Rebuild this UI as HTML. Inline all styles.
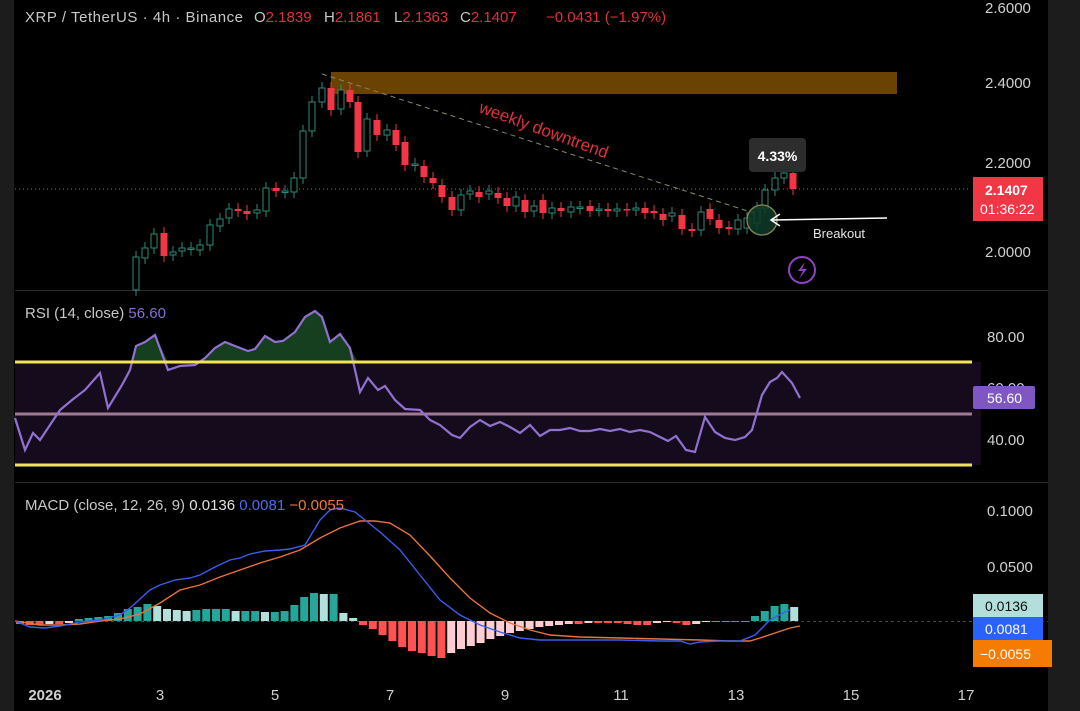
<!DOCTYPE html>
<html><head><meta charset="utf-8"><style>
html,body{margin:0;padding:0;background:#000;width:1080px;height:711px;overflow:hidden}
svg{display:block}
text{font-family:"Liberation Sans",sans-serif}
</style></head><body>
<svg id="s" width="1080" height="711" viewBox="0 0 1080 711" xmlns="http://www.w3.org/2000/svg">
<rect width="1080" height="711" fill="#000"/>
<rect x="0" y="0" width="14" height="711" fill="#1c1c1c"/>
<rect x="1048" y="0" width="32" height="711" fill="#1c1c1c"/>
<line x1="15" y1="290.5" x2="1048" y2="290.5" stroke="#2b2b2b"/>
<line x1="15" y1="482.5" x2="1048" y2="482.5" stroke="#2b2b2b"/>
<rect x="331" y="72" width="566" height="22" fill="#6a4204"/>
<line x1="15" y1="189" x2="970" y2="189" stroke="#777" stroke-dasharray="1 3"/>
<line x1="322" y1="74" x2="760" y2="215" stroke="#8a8a6a" stroke-dasharray="5 4"/>
<text x="478" y="112" fill="#e0303d" font-size="17" transform="rotate(20 478 112)">weekly downtrend</text>
<g id="candles"></g>
<circle cx="762" cy="220" r="15" fill="#0f3a28" fill-opacity=".85" stroke="#8a8a4a" stroke-width="1.3"/>
<line x1="887" y1="218" x2="772" y2="220" stroke="#fff" stroke-width="1.5"/>
<path d="M780 214 L771 220 L780 226" fill="none" stroke="#fff" stroke-width="1.5"/>
<text x="813" y="238" fill="#e6e6e6" font-size="13">Breakout</text>
<rect x="749" y="138" width="57" height="34" rx="4" fill="#2d2d2d"/>
<text x="777.5" y="161" fill="#fff" font-size="14" font-weight="bold" text-anchor="middle">4.33%</text>
<circle cx="802" cy="270" r="13" fill="none" stroke="#8e44c0" stroke-width="2"/>
<path d="M805 262 L798 271 L803 271 L799 279 L807 269 L802 269 Z" fill="#8e44c0"/>
<g font-size="15" fill="#c8c8c8">
<text x="25" y="22" textLength="218" lengthAdjust="spacing">XRP / TetherUS · 4h · Binance</text>
<text x="254" y="22">O<tspan fill="#e0303d">2.1839</tspan></text>
<text x="324" y="22">H<tspan fill="#e0303d">2.1861</tspan></text>
<text x="394" y="22">L<tspan fill="#e0303d">2.1363</tspan></text>
<text x="460" y="22">C<tspan fill="#e0303d">2.1407</tspan></text>
<text x="546" y="22" fill="#e0303d">−0.0431 (−1.97%)</text>
</g>
<g fill="#d0d0d0" font-size="15">
<text x="985" y="13">2.6000</text><text x="985" y="88">2.4000</text><text x="985" y="168">2.2000</text><text x="985" y="257">2.0000</text>
<text x="987" y="342">80.00</text><text x="987" y="445">40.00</text><text x="987" y="393">60.00</text>
<text x="987" y="516">0.1000</text><text x="987" y="572">0.0500</text>
</g>
<rect x="973" y="177" width="70" height="44" fill="#f23645"/>
<text x="985" y="195" fill="#fff" font-size="14" font-weight="bold">2.1407</text>
<text x="980" y="214" fill="#fff" font-size="14">01:36:22</text>
<rect x="15" y="362" width="966" height="103" fill="#150b1d"/>
<line x1="15" y1="414" x2="972" y2="414" stroke="#a07a95" stroke-width="3"/>
<path id="rsifill" fill="#1f5a2c" fill-opacity=".7"/>
<polyline id="rsi" fill="none" stroke="#9170d0" stroke-width="2.2"/>
<line x1="15" y1="362" x2="972" y2="362" stroke="#f1e35a" stroke-width="3"/>
<line x1="15" y1="465" x2="972" y2="465" stroke="#f1e35a" stroke-width="3"/>
<rect x="973" y="386" width="62" height="23" rx="2" fill="#7e57c2"/>
<text x="987" y="403" fill="#fff" font-size="14">56.60</text>
<text x="25" y="318" fill="#c8c8c8" font-size="15">RSI (14, close) <tspan fill="#8a6fd0">56.60</tspan></text>
<line x1="15" y1="621.5" x2="1048" y2="621.5" stroke="#444" stroke-dasharray="3 3"/>
<g id="hist"></g>
<polyline id="sig" fill="none" stroke="#e8743a" stroke-width="1.4"/>
<polyline id="macd" fill="none" stroke="#3a5ff0" stroke-width="1.4"/>
<text x="25" y="510" fill="#c8c8c8" font-size="15">MACD (close, 12, 26, 9)  <tspan fill="#e0e0e0">0.0136</tspan>  <tspan fill="#4a6cf7">0.0081</tspan>  <tspan fill="#f07a3a">−0.0055</tspan></text>
<rect x="973" y="594" width="70" height="23" fill="#b2dfdb"/>
<text x="985" y="611" fill="#111" font-size="14">0.0136</text>
<rect x="973" y="617" width="70" height="23" fill="#2962ff"/>
<text x="985" y="634" fill="#fff" font-size="14">0.0081</text>
<rect x="973" y="640" width="79" height="27" fill="#f57c00"/>
<text x="980" y="659" fill="#fff" font-size="14">−0.0055</text>
<g fill="#d0d0d0" font-size="15" text-anchor="middle">
<text x="45" y="700" font-weight="bold">2026</text><text x="160" y="700">3</text><text x="275" y="700">5</text><text x="390" y="700">7</text><text x="505" y="700">9</text><text x="621" y="700">11</text><text x="736" y="700">13</text><text x="851" y="700">15</text><text x="966" y="700">17</text>
</g>
</svg>
<script>
var NS="http://www.w3.org/2000/svg";
function el(t,a,p){var e=document.createElementNS(NS,t);for(var k in a)e.setAttribute(k,a[k]);p.appendChild(e);return e;}
var C=[[136,290,257],[145,258,248],[154,248,234],[164,233,256],[173,255,252],[182,251,248],[191,248,248],[200,250,245],[210,245,225],[220,226,219],[229,218,209],[238,209,211],[247,211,214],[257,213,210],[266,211,188],[276,188,191],[285,191,191],[294,192,178],[303,178,131],[312,131,102],[322,102,88],[331,88,110],[341,109,90],[350,90,102],[358,102,152],[367,151,119],[377,120,135],[387,135,130],[396,130,145],[405,142,165],[415,164,164],[424,166,177],[433,178,183],[442,185,197],[452,197,210],[461,210,195],[470,194,191],[479,192,197],[489,194,191],[498,193,198],[507,198,206],[516,206,197],[525,200,212],[534,211,206],[543,200,213],[552,213,208],[561,208,211],[571,212,207],[580,208,207],[590,206,211],[599,209,209],[608,209,211],[617,211,209],[627,209,210],[636,210,208],[645,208,213],[654,211,213],[663,214,220],[672,216,213],[682,215,229],[692,229,231],[701,230,212],[710,209,219],[719,220,228],[729,227,229],[738,229,220],[747,228,218],[757,223,208],[765,208,190],[775,190,178],[784,178,173],[793,173,189]];
var g=document.getElementById("candles");
C.forEach(function(c){var x=c[0],o=c[1],cl=c[2],up=cl<=o;var t=Math.min(o,cl),b=Math.max(o,cl);if(b-t<1.5)b=t+1.5;
var col=up?"#2a8a78":"#f23645";
el("line",{x1:x,y1:t-6,x2:x,y2:b+6,stroke:col,"stroke-width":1},g);
if(up)el("rect",{x:x-3,y:t,width:6,height:b-t,fill:"#000",stroke:col,"stroke-width":1},g);
else el("rect",{x:x-3.5,y:t,width:7,height:b-t,fill:col},g);});
var R=[[15,418],[25,450],[33,433],[40,440],[50,425],[60,410],[72,400],[85,390],[100,373],[108,408],[122,385],[130,370],[136,346],[145,342],[155,335],[168,370],[180,366],[195,365],[205,358],[215,348],[225,342],[235,346],[248,351],[255,349],[265,336],[275,342],[283,341],[295,332],[305,317],[315,311],[322,317],[330,342],[340,334],[350,348],[360,392],[368,378],[378,390],[385,386],[395,400],[405,409],[420,410],[430,420],[440,425],[452,435],[460,438],[470,427],[480,420],[490,426],[500,422],[510,427],[520,433],[530,425],[540,436],[550,430],[560,430],[570,428],[580,431],[590,431],[600,429],[610,431],[620,429],[630,432],[640,430],[650,432],[660,437],[668,441],[676,436],[686,450],[695,452],[705,417],[715,432],[725,438],[735,440],[745,437],[752,430],[762,395],[770,382],[777,378],[782,372],[792,383],[800,398]];
document.getElementById("rsi").setAttribute("points",R.map(function(p){return p.join(",")}).join(" "));
var f="M132,362 "+R.filter(function(p){return p[0]>=134&&p[0]<=358}).map(function(p){return "L"+p[0]+","+Math.min(p[1],362)}).join(" ")+" L358,362 Z";
document.getElementById("rsifill").setAttribute("d",f);
var M=[[15,621],[30,627],[45,628],[60,626],[80,622],[100,620],[120,615],[130,608],[150,590],[160,585],[175,580],[190,578],[200,575],[215,567],[230,560],[240,558],[250,554],[265,551],[280,550],[290,549],[305,545],[320,520],[330,510],[340,508],[355,512],[365,520],[380,532],[400,550],[420,575],[440,600],[460,615],[480,625],[500,632],[520,638],[540,640],[570,640],[620,640],[660,641],[680,641],[690,644],[700,642],[720,641],[740,641],[755,635],[770,620],[785,612],[790,610]];
var S=[[15,621],[40,625],[60,625],[80,624],[100,621],[120,619],[140,614],[160,603],[180,590],[200,585],[220,577],[240,570],[260,563],[280,557],[300,550],[320,538],[340,528],[360,521],[375,521],[390,523],[410,535],[430,556],[450,578],[470,598],[490,613],[510,623],[530,630],[550,635],[580,637],[620,638],[660,639],[700,640],[730,641],[750,641],[760,638],[775,633],[790,628],[800,626]];
document.getElementById("macd").setAttribute("points",M.map(function(p){return p.join(",")}).join(" "));
document.getElementById("sig").setAttribute("points",S.map(function(p){return p.join(",")}).join(" "));
var H=[-3,-4,-4,-3,-3,-2,2,3,4,5,8,12,14,17,15,12,11,10,11,12,12,12,10,10,10,9,9,10,16,24,28,27,27,8,3,-4,-8,-14,-20,-26,-30,-32,-35,-37,-32,-28,-25,-22,-18,-15,-12,-10,-8,-6,-5,-4,-3,-3,-2,-2,-2,-2,-3,-4,-4,-2,-1,-2,-4,-3,-1,-1,-1,-1,-1,5,10,15,17,14];
var hg=document.getElementById("hist");
H.forEach(function(v,i){var x=16+i*9.8;var p=H[i-1]||0;var col;
if(v>=0)col=v>=p?"#26a69a":"#b2dfdb";else col=v<=p?"#ff5252":"#ffcdd2";
var y=v>=0?621-v:621;el("rect",{x:x,y:y,width:8,height:Math.abs(v)||1,fill:col},hg);});
</script>
</body></html>
